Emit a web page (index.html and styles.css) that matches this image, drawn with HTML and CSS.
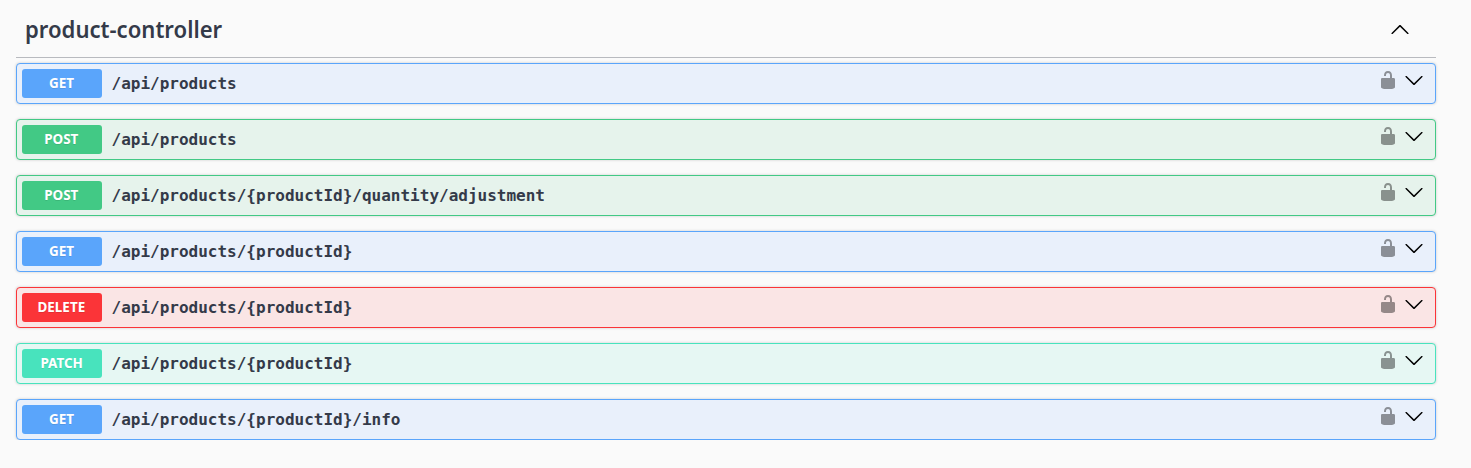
FILE: index.html
```html
<!DOCTYPE html>
<html lang="en">
<head>
<meta charset="utf-8">
<title>product-controller</title>
<link rel="stylesheet" href="styles.css">
</head>
<body>
<svg class="defs" width="0" height="0">
<symbol id="lock" viewBox="0 0 20 20"><path d="M15.8 8H14V5.6C14 2.703 12.665 1 10 1 7.334 1 6 2.703 6 5.6V6h2v-.801C8 3.754 8.797 3 10 3c1.203 0 2 .754 2 2.199V8H4c-.553 0-1 .646-1 1.199V17c0 .549.428 1.139.951 1.307l1.197.387C5.672 18.861 6.55 19 7.1 19h5.8c.549 0 1.428-.139 1.951-.307l1.196-.387c.524-.167.953-.757.953-1.306V9.199C17 8.646 16.352 8 15.8 8z"/></symbol>
<symbol id="down" viewBox="0 0 20 20"><path d="M17.418 6.109c.272-.268.709-.268.979 0s.271.701 0 .969l-7.908 7.83c-.27.268-.707.268-.979 0l-7.908-7.83c-.27-.268-.27-.701 0-.969.271-.268.709-.268.979 0L10 13.25l7.418-7.141z"/></symbol>
<symbol id="up" viewBox="0 0 20 20"><path d="M17.418 14.908c.272.268.709.268.979 0s.271-.701 0-.969l-7.908-7.83c-.27-.268-.707-.268-.979 0l-7.908 7.83c-.27.268-.27.701 0 .969.271.268.709.268.979 0L10 7.767l7.418 7.141z"/></symbol>
</svg>
<main class="section">
<h3 class="tag"><span class="tag-name">product-controller</span><svg class="icon"><use href="#up"/></svg></h3>
<div class="operations">
<div class="row get"><span class="method"><span>GET</span></span><span class="path">/api/products</span><svg class="icon lock"><use href="#lock"/></svg><svg class="icon"><use href="#down"/></svg></div>
<div class="row post"><span class="method"><span>POST</span></span><span class="path">/api/products</span><svg class="icon lock"><use href="#lock"/></svg><svg class="icon"><use href="#down"/></svg></div>
<div class="row post"><span class="method"><span>POST</span></span><span class="path">/api/products/{productId}/quantity/adjustment</span><svg class="icon lock"><use href="#lock"/></svg><svg class="icon"><use href="#down"/></svg></div>
<div class="row get"><span class="method"><span>GET</span></span><span class="path">/api/products/{productId}</span><svg class="icon lock"><use href="#lock"/></svg><svg class="icon"><use href="#down"/></svg></div>
<div class="row delete"><span class="method"><span>DELETE</span></span><span class="path">/api/products/{productId}</span><svg class="icon lock"><use href="#lock"/></svg><svg class="icon"><use href="#down"/></svg></div>
<div class="row patch"><span class="method"><span>PATCH</span></span><span class="path">/api/products/{productId}</span><svg class="icon lock"><use href="#lock"/></svg><svg class="icon"><use href="#down"/></svg></div>
<div class="row get"><span class="method"><span>GET</span></span><span class="path">/api/products/{productId}/info</span><svg class="icon lock"><use href="#lock"/></svg><svg class="icon"><use href="#down"/></svg></div>
</div>
</main>
</body>
</html>
```
FILE: styles.css
```css
* { box-sizing: border-box; }
body { margin: 0; background: #fafafa; overflow: hidden; }
.defs { display: block; }
.section { width: 1420px; margin-left: 16px; color: #343a49; }
.tag {
  display: flex;
  align-items: center;
  justify-content: space-between;
  height: 58px;
  margin: 0 0 5px;
  padding: 0 26px 0 9px;
  border-bottom: 1px solid rgba(59, 65, 81, .35);
  font: 600 24px/30px "Noto Sans", sans-serif;
}
.tag-name { transform: scaleX(.92); transform-origin: left; }
.icon { width: 20px; height: 20px; fill: #000; flex: none; }
.tag .icon { margin-top: 1px; }
.operations { display: flex; flex-direction: column; gap: 15px; }
.row {
  display: flex;
  align-items: center;
  height: 41px;
  padding: 0 11px 0 5px;
  border: 1px solid var(--color);
  border-radius: 4px;
  background: var(--tint);
  box-shadow: 0 0 3px rgba(0, 0, 0, .19);
}
.get { --color: #5aa5fb; --tint: #e9f0fb; }
.post { --color: #42c985; --tint: #e6f3ec; }
.delete { --color: #fb3438; --tint: #fae5e5; }
.patch { --color: #48e3bd; --tint: #e6f7f3; }
.method {
  display: flex;
  justify-content: center;
  width: 80px;
  height: 29px;
  border-radius: 3px;
  background: var(--color);
  color: #fff;
  font: 700 14px/28px "Noto Sans", sans-serif;
  text-shadow: 0 1px 0 rgba(0, 0, 0, .1);
}
.method span { transform: translateX(-.5px) scaleX(.96); }
.path { flex: 1; padding-left: 9.5px; font: 700 16px/20px "DejaVu Sans Mono", monospace; }
.row .icon { margin: -7px 0 0 6px; }
.row .lock { opacity: .4; }
```
